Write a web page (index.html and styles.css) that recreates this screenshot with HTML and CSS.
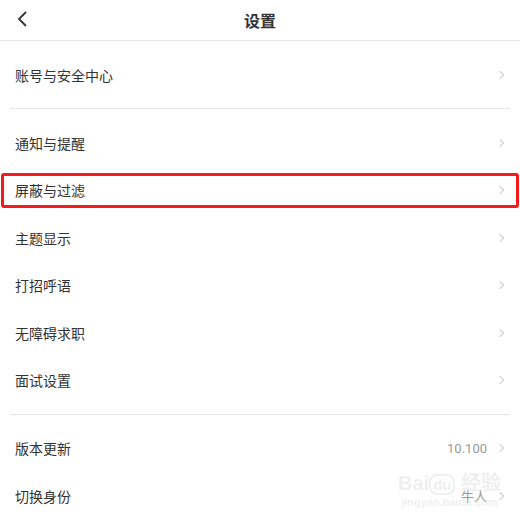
FILE: index.html
```html
<!DOCTYPE html>
<html lang="zh-CN">
<head>
  <meta charset="UTF-8" />
  <meta name="viewport" content="width=device-width, initial-scale=1.0"/>
  <title>设置</title>
  <link rel="stylesheet" href="styles.css">
</head>
<body>
  <header class="top-bar">
    <span class="back">
      <svg width="12" height="16" viewBox="0 0 12 16"><path d="M10 1 L3 8 L10 15" fill="none" stroke="#333" stroke-width="1.8"/></svg>
    </span>
    <h1>设置</h1>
  </header>

  <div class="group">
    <div class="row"><span class="label">账号与安全中心</span><span class="arrow"></span></div>
  </div>

  <div class="group">
    <div class="row"><span class="label">通知与提醒</span><span class="arrow"></span></div>
    <div class="row marked"><span class="label">屏蔽与过滤</span><span class="arrow"></span></div>
    <div class="row"><span class="label">主题显示</span><span class="arrow"></span></div>
    <div class="row"><span class="label">打招呼语</span><span class="arrow"></span></div>
    <div class="row"><span class="label">无障碍求职</span><span class="arrow"></span></div>
    <div class="row"><span class="label">面试设置</span><span class="arrow"></span></div>
  </div>

  <div class="group last">
    <div class="row"><span class="label">版本更新</span><span class="value">10.100</span><span class="arrow"></span></div>
    <div class="row"><span class="label">切换身份</span><span class="value">牛人</span><span class="arrow"></span></div>
  </div>

  <div class="watermark">
    <span class="wm-logo">Bai<span class="wm-du">du</span> 经验</span>
    <span class="wm-url">jingyan.baidu.com</span>
  </div>
</body>
</html>
```

FILE: styles.css
```css
body {
  font-family: "Noto Sans CJK SC", "Noto Sans", sans-serif;
  background: #fff;
  color: #333;
  margin: 0;
  padding: 0;
  position: relative;
  overflow: hidden;
}

.top-bar {
  height: 40px;
  border-bottom: 1px solid #e6e6e6;
  display: flex;
  align-items: center;
  justify-content: center;
  position: relative;
}

.top-bar h1 {
  margin: 0;
  font-size: 16px;
  font-weight: bold;
  color: #333;
}

.back {
  position: absolute;
  left: 16px;
  top: 11px;
  display: flex;
}

.group {
  padding: 10px 0;
  border-bottom: 1px solid #e6e6e6;
  margin: 0 10px;
}

.group.last {
  border-bottom: none;
}

.row {
  height: 47.4px;
  display: flex;
  align-items: center;
  padding: 0 5px 0 5px;
  position: relative;
}

.label {
  font-size: 14px;
  color: #333;
  flex: 1;
}

.value {
  font-family: Roboto, "Noto Sans CJK SC", sans-serif;
  font-size: 13px;
  color: #999;
  margin-right: 10px;
}

.arrow {
  width: 5px;
  height: 5px;
  border-top: 1px solid #ccc;
  border-right: 1px solid #ccc;
  transform: rotate(45deg);
  margin-right: 2px;
}

.row.marked::after {
  content: "";
  position: absolute;
  left: -9px;
  right: -9px;
  top: 6px;
  bottom: 6px;
  border: 3px solid #f21a1a;
  border-radius: 3px;
}

.watermark {
  position: absolute;
  left: 398px;
  top: 472px;
  display: flex;
  flex-direction: column;
  align-items: center;
  pointer-events: none;
}

.wm-logo {
  font-family: "Liberation Sans", sans-serif;
  font-size: 20px;
  font-weight: bold;
  line-height: 22px;
  color: rgba(210, 210, 210, 0.35);
}

.wm-du {
  border: 2px solid rgba(210, 210, 210, 0.35);
  border-radius: 8px;
  padding: 0 2px;
  font-size: 15px;
}

.wm-url {
  font-family: "Liberation Sans", sans-serif;
  font-size: 11px;
  font-weight: bold;
  color: rgba(210, 210, 210, 0.35);
}
```
